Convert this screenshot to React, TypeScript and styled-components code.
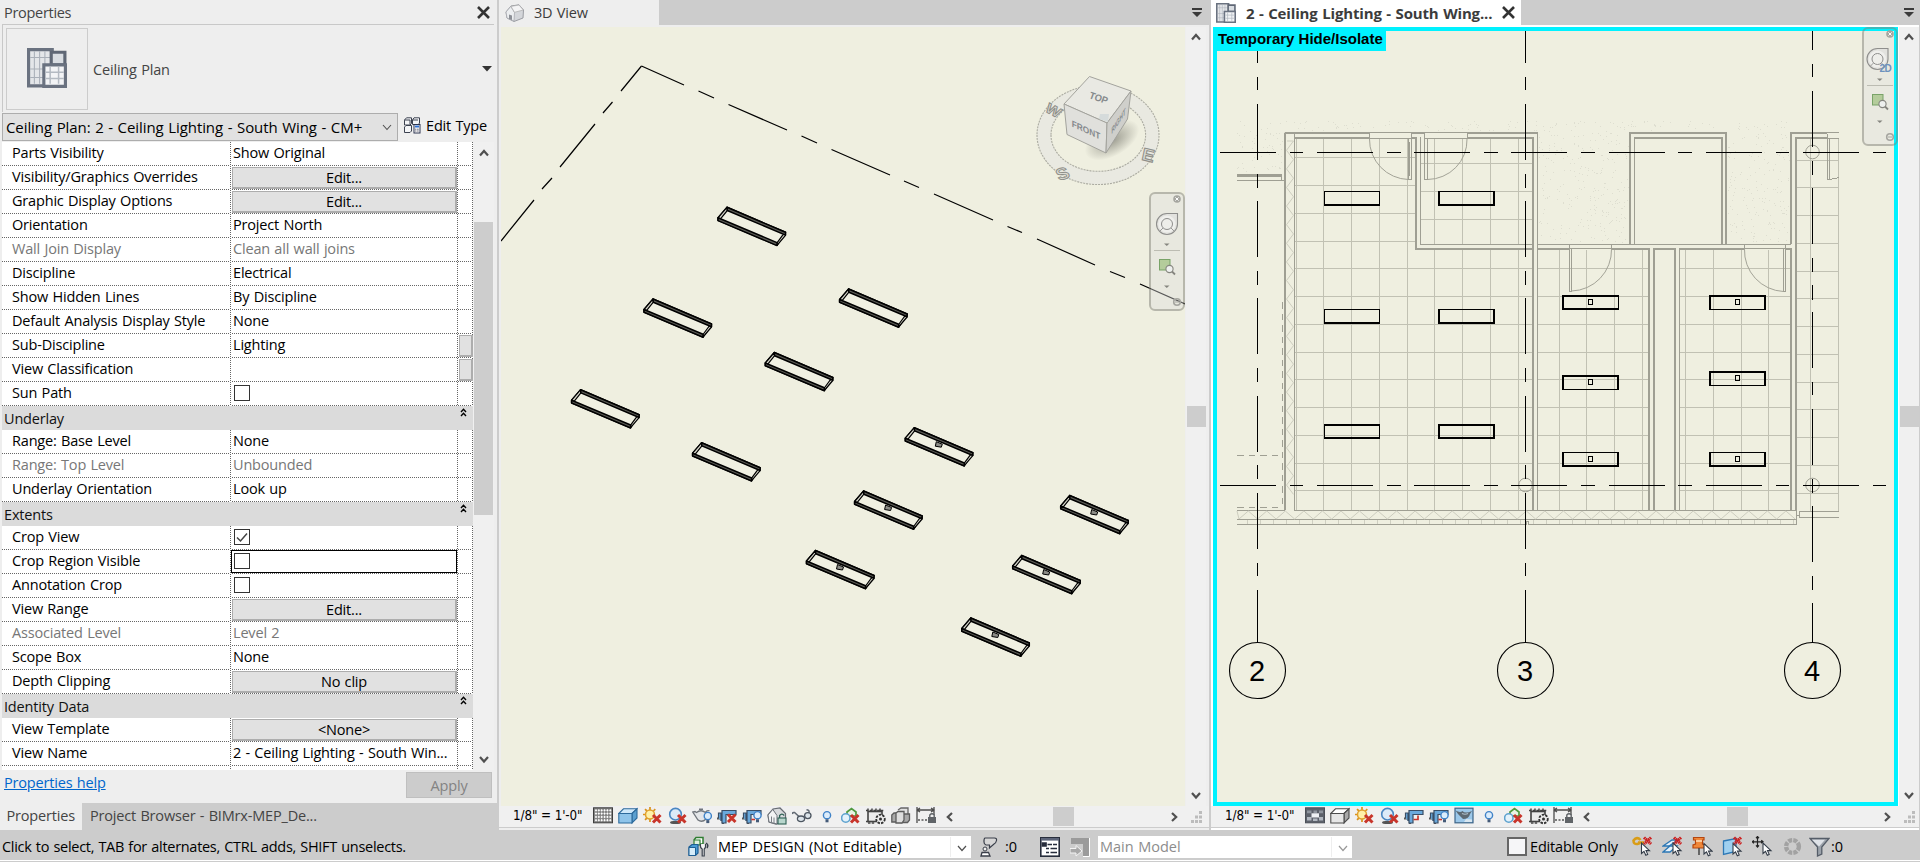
import React from "react";
import styled, { createGlobalStyle, css } from "styled-components";

const GlobalStyle = createGlobalStyle`
  * { box-sizing: border-box; }
  html, body { margin: 0; padding: 0; overflow: hidden; }
  body { background: #ccc; font-family: "Open Sans", "Noto Sans", sans-serif; font-size: 14.5px; letter-spacing: -0.18px; word-spacing: 0.8px; color: #000; }
  svg { display: block; flex: none; }
`;

/* ---------- frame ---------- */

const AppFrame = styled.div`
  width: 1920px;
  height: 862px;
  display: flex;
  flex-direction: column;
  background: #ccc;
`;

const Workspace = styled.div`
  display: flex;
  height: 830px;
`;

/* ---------- properties palette ---------- */

const Palette = styled.section`
  width: 497px;
  height: 830px;
  display: flex;
  flex-direction: column;
  background: #eee;
`;

const Splitter = styled.div<{ $w: number }>`
  width: ${(p) => p.$w}px;
  height: 830px;
  background: #ccc;
`;

const PaletteTitle = styled.header`
  height: 24px;
  display: flex;
  align-items: center;
  justify-content: space-between;
  padding: 0 7px 0 4px;
  color: #444;
  letter-spacing: -0.3px;
`;

const TypeSelector = styled.div`
  height: 88px;
  margin: 0 3px 0 2px;
  border-top: 1px solid #c8c8c8;
  border-left: 1px solid #c8c8c8;
  display: flex;
  align-items: center;
  padding: 0 2px 0 3px;
  color: #444;
`;

const Preview = styled.div`
  width: 82px;
  height: 82px;
  border: 1px solid #ccc;
  display: flex;
  padding: 19px 0 0 20px;
`;

const TypeName = styled.span`
  flex: 1;
  padding: 1px 0 0 5px;
`;

const InstanceRow = styled.div`
  height: 30px;
  padding: 1px 0 1px 2px;
  display: flex;
  align-items: center;
`;

const InstanceSelect = styled.div`
  width: 396px;
  height: 28px;
  border: 1px solid #adadad;
  background: #e1e1e1;
  display: flex;
  align-items: center;
  justify-content: space-between;
  padding: 0 5px 0 3px;
  font-size: 15px;
  letter-spacing: -0.08px;
`;

const EditType = styled.div`
  display: flex;
  align-items: center;
  gap: 5px;
  padding: 0 0 4px 6px;
`;

const GridArea = styled.div`
  height: 628px;
  margin: 0 3px 0 2px;
  display: flex;
`;

const Grid = styled.div`
  width: 471px;
  height: 628px;
  overflow: hidden;
  background: #fff;
`;

const dotsX = css`repeating-linear-gradient(90deg, #666 0 1px, #fff 1px 2px)`;
const dotsY = css`repeating-linear-gradient(180deg, #666 0 1px, #fff 1px 2px)`;

const Row = styled.div`
  height: 24px;
  display: flex;
  background: ${dotsX} 0 23px / 100% 1px no-repeat;
`;

const NameCell = styled.div<{ $dim?: boolean }>`
  width: 229px;
  height: 24px;
  padding-left: 10px;
  line-height: 22px;
  color: ${(p) => (p.$dim ? "#777" : "#000")};
  background: ${dotsY} 228px 0 / 1px 100% no-repeat;
`;

const ValueCell = styled.div<{ $dim?: boolean; $focus?: boolean }>`
  width: 227px;
  height: 24px;
  padding-left: ${(p) => (p.$focus ? 0 : 2)}px;
  line-height: 22px;
  white-space: nowrap;
  color: ${(p) => (p.$dim ? "#777" : "#000")};
  background: ${dotsY} 226px 0 / 1px 100% no-repeat;
`;

const FocusRing = styled.div`
  width: 226px;
  height: 23px;
  border: 1px solid #000;
  padding: 0 0 0 1px;
`;

const AssocCell = styled.div`
  width: 15px;
  height: 24px;
  background: ${dotsY} 14px 0 / 1px 100% no-repeat;
`;

const CellButton = styled.div`
  width: 225px;
  height: 22px;
  margin-top: 1px;
  margin-left: -1px;
  border: 1px solid #adadad;
  border-right-width: 2px;
  border-bottom-width: 2px;
  background: #e1e1e1;
  text-align: center;
  line-height: 20px;
`;

const AssocButton = styled(CellButton)`
  width: 14px;
  margin-left: 1px;
`;

const Check = styled.div<{ $inset?: boolean }>`
  width: 16px;
  height: 16px;
  margin-top: ${(p) => (p.$inset ? 2 : 3)}px;
  margin-left: 1px;
  border: 1px solid #333;
  background: #fff;
`;

const GroupRow = styled.div`
  height: 24px;
  display: flex;
  justify-content: space-between;
  padding: 2px 6px 0 2px;
  line-height: 21px;
  background: #dbdbdb;
  color: #111;
`;

const PaletteFooter = styled.div`
  height: 33px;
  display: flex;
  justify-content: space-between;
  padding: 2px 5px 0 4px;
`;

const HelpLink = styled.a`
  color: #0066cc;
  text-decoration: underline;
  line-height: 22px;
`;

const Apply = styled.div`
  width: 86px;
  height: 26px;
  border: 1px solid #bfbfbf;
  background: #ccc;
  color: #838383;
  text-align: center;
  line-height: 25px;
`;

const PaletteTabs = styled.div`
  height: 27px;
  display: flex;
  background: #ccc;
  color: #444;
`;

const PaletteTab = styled.div<{ $active?: boolean; $w: number }>`
  width: ${(p) => p.$w}px;
  padding-left: ${(p) => (p.$active ? 6.5 : 8)}px;
  line-height: 25px;
  background: ${(p) => (p.$active ? "#eee" : "#ccc")};
`;

/* ---------- scroll bars ---------- */

const VScroll = styled.div<{ $w?: number }>`
  width: ${(p) => p.$w ?? 20}px;
  height: 100%;
  background: #f0f0f0;
  display: flex;
  flex-direction: column;
  align-items: center;
`;

const Gap = styled.div<{ $h: number }>`
  height: ${(p) => p.$h}px;
`;

const VThumb = styled.div<{ $h: number }>`
  width: 19px;
  height: ${(p) => p.$h}px;
  background: #cdcdcd;
`;

/* ---------- document views ---------- */

const DocView = styled.section<{ $w: number; $bg: string }>`
  width: ${(p) => p.$w}px;
  height: 830px;
  display: flex;
  flex-direction: column;
  background: ${(p) => p.$bg};
`;

const TabBar = styled.div<{ $pad: number }>`
  height: 25px;
  display: flex;
  align-items: center;
  justify-content: space-between;
  background: #ccc;
  padding-right: ${(p) => p.$pad}px;
`;

const DocTab = styled.div<{ $w: number; $bg: string; $bold?: boolean }>`
  width: ${(p) => p.$w}px;
  height: 25px;
  display: flex;
  align-items: center;
  padding: 0 7px 0 ${(p) => (p.$bold ? 5 : 6)}px;
  gap: 10px;
  color: #3c3c3c;
  white-space: nowrap;
  background: ${(p) => p.$bg};
  font-weight: ${(p) => (p.$bold ? 700 : 400)};
  font-size: ${(p) => (p.$bold ? 15 : 14.5)}px;
  letter-spacing: ${(p) => (p.$bold ? -0.15 : -0.18)}px;
`;

const DocTitle = styled.span`
  flex: 1;
`;

const DocBody = styled.div<{ $pad: number }>`
  height: 779px;
  margin-top: 2px;
  margin-left: ${(p) => p.$pad}px;
  display: flex;
  gap: 1px;
`;

const Canvas = styled.div`
  position: relative;
  height: 779px;
  background: #efefe0;
`;

const IsolateBadge = styled.div`
  position: absolute;
  left: 0;
  top: 0;
  width: 173px;
  height: 24px;
  padding-left: 5px;
  background: #00f2ff;
  font: bold 15px/24px "Liberation Sans", Arial, sans-serif;
  letter-spacing: 0;
  word-spacing: 0;
  white-space: nowrap;
`;

const NavSlot = styled.div<{ $x: number; $y: number }>`
  position: absolute;
  left: ${(p) => p.$x}px;
  top: ${(p) => p.$y}px;
`;

const ControlBar = styled.div`
  height: 22px;
  display: flex;
  background: #f0f0f0;
  border-bottom: 1px solid #ccc;
`;

const Scale = styled.span<{ $pad: number; $w: number }>`
  width: ${(p) => p.$w}px;
  padding-left: ${(p) => p.$pad}px;
  font: 13.3px/20px "DejaVu Sans Condensed", "DejaVu Sans", sans-serif;
  letter-spacing: -0.1px;
  word-spacing: 0;
  white-space: nowrap;
`;

const IconStrip = styled.div`
  display: flex;
  gap: 4.85px;
  padding-top: 1px;
`;

const HScroll = styled.div`
  flex: 1;
  display: flex;
  align-items: center;
`;

const HSpace = styled.div<{ $w: number }>`
  width: ${(p) => p.$w}px;
`;

const HThumb = styled.div`
  width: 21px;
  height: 19px;
  background: #cdcdcd;
`;

/* ---------- status bar ---------- */

const StatusBar = styled.footer`
  height: 31px;
  display: flex;
  align-items: center;
  background: #ccc;
  border-bottom: 1px solid #fff;
  padding: 3px 0 0 2px;
  white-space: nowrap;
`;

const StatusHint = styled.div`
  width: 686px;
  letter-spacing: -0.29px;
`;

const Combo = styled.div<{ $dim?: boolean }>`
  width: 254px;
  height: 22px;
  display: flex;
  align-items: center;
  justify-content: space-between;
  padding: 0 1px 0 ${(p) => (p.$dim ? 2 : 1)}px;
  background: #fff;
  letter-spacing: 0;
  color: ${(p) => (p.$dim ? "#8c8c8c" : "#000")};
`;

const ComboArrow = styled.span`
  width: 20px;
  height: 20px;
  padding: 6px 0 0 6px;
  border-left: 1px solid #eee;
`;

const StatusCell = styled.div<{ $w: number; $x?: number }>`
  width: ${(p) => p.$w}px;
  padding-left: ${(p) => p.$x ?? 0}px;
`;

const BigCheck = styled.div`
  width: 20px;
  height: 19px;
  border: 2px solid #666;
  background: #f6f6f8;
`;

/* ---------- small glyphs ---------- */

const Chevron = ({ dir, size = 10, color = "#505050", sw = 2.2 }: { dir: "up" | "down" | "left" | "right"; size?: number; color?: string; sw?: number }) => {
  const d = { up: "M1 7.5L5 3L9 7.5", down: "M1 3L5 7.5L9 3", left: "M7 1L2.8 5L7 9", right: "M3 1L7.2 5L3 9" }[dir];
  return (
    <svg width={size} height={size} viewBox="0 0 10 10">
      <path d={d} fill="none" stroke={color} strokeWidth={sw} />
    </svg>
  );
};

const CloseX = ({ s = 13 }: { s?: number }) => (
  <svg width={s} height={s} viewBox="0 0 13 13">
    <path d="M1 1L12 12M12 1L1 12" stroke="#333" strokeWidth="2.6" />
  </svg>
);

const TabMenu = () => (
  <svg width="10" height="9" viewBox="0 0 10 9">
    <path d="M0 0H10V2H0zM0 4H10L5 9z" fill="#3a3a3a" />
  </svg>
);

const DoubleUp = () => (
  <svg width="7" height="9" viewBox="0 0 7 9">
    <path d="M1 4L3.5 1.3L6 4M1 8L3.5 5.3L6 8" fill="none" stroke="#000" strokeWidth="1.4" />
  </svg>
);

const Grip = () => (
  <svg width="12" height="12" viewBox="0 0 12 12">
    {[[8, 0], [8, 4.5], [4, 4.5], [8, 9], [4, 9], [0, 9]].map(([x, y]) => (
      <rect key={`${x}-${y}`} x={x} y={y} width="3" height="3" fill="#bcbcbc" />
    ))}
  </svg>
);

const PlanIcon = ({ size }: { size: number }) => (
  <svg width={size} height={size} viewBox="0 0 38 38">
    <path d="M1.5 1.5H24V36H1.5z" fill="#e4e6e9" stroke="#6a7280" strokeWidth="3" />
    <path d="M7 3V34M12 3V34M17 3V34M3 9H22M3 20H22M3 28H22" stroke="#a9afb8" strokeWidth="1" />
    <path d="M23 4H36V16H23z" fill="#d9dde2" stroke="#5f6775" strokeWidth="3" />
    <path d="M16 16H36.5V36.5H16z" fill="#f3f4f6" stroke="#6a7280" strokeWidth="3" />
    <path d="M22 18V34M30 18V34M18 23H35M18 29H35" stroke="#b4bac2" strokeWidth="1.4" />
  </svg>
);

const HouseIcon = () => (
  <svg width="19" height="18" viewBox="0 0 19 18">
    <path d="M1 8L6 2L14 .8L18.5 6L18 14L9 17.5L2 14z" fill="#d4d6da" stroke="#9a9ca2" strokeWidth="1" />
    <path d="M1 8L5.8 2.4L9.5 8.5L9 17L2 14z" fill="#eceef0" stroke="#a8aab0" strokeWidth=".8" />
    <path d="M6 2.4L14 1L18.3 6L9.5 8.3z" fill="#f4f4f5" stroke="#aaa" strokeWidth=".7" />
    <path d="M4 10.5V15L7 16V11.5z" fill="#8d9097" />
  </svg>
);

const EditTypeIcon = () => (
  <svg width="17" height="17" viewBox="0 0 17 17">
    <g fill="#f4f5f7" stroke="#3c4250" strokeWidth="1">
      <path d="M.5 3L2.5 .8H7.5V6.5L6 8H.5zM8.5 3L10 .8H15.5V6L14.5 7.5H8.5z" />
      <path d="M.5 10L2 8.5H7.5V14L6 15.5H.5z" />
      <path d="M.5 3H6V8M8.5 3H14" />
    </g>
    <rect x="10" y="7.5" width="6" height="8.5" fill="#fff" stroke="#2c3550" />
    <rect x="11" y="8.5" width="4" height="2" fill="#2f6fd0" />
    <path d="M11.2 12.2H15M11.2 14H15" stroke="#556" strokeDasharray="1 .6" />
  </svg>
);

/* ---------- view control bar icons (20 x 18) ---------- */

const Ico = ({ children, w = 20, h = 18 }: { children: React.ReactNode; w?: number; h?: number }) => (
  <svg width={w} height={h} viewBox={`0 0 ${w} ${h}`}>{children}</svg>
);

const RedX = ({ x, y, s = 7.5 }: { x: number; y: number; s?: number }) => (
  <path d={`M${x} ${y}l${s} ${s}m0 ${-s}l${-s} ${s}`} stroke="#c8352b" strokeWidth="3" />
);

const Bulb = ({ x }: { x: number }) => (
  <g>
    <circle cx={x} cy="8.2" r="3.6" fill="#dcecfb" stroke="#3f82c8" strokeWidth="1.4" />
    <path d={`M${x - 1.5} 12.3h3v3h-3z`} fill="#445a78" />
  </g>
);

const DetailFine = () => {
  const dots = [];
  for (let r = 0; r < 4; r++) for (let c = 0; c < 6; c++) dots.push(<path key={`${r}-${c}`} d={`M${3 + c * 2.85} ${1.9 + r * 3.3}l1.2 1.4l-1.2 1.4l-1.2-1.4z`} fill="#fff" />);
  return <Ico><rect x=".5" y=".8" width="19" height="15" fill="#848484" stroke="#3f3f3f" />{dots}</Ico>;
};

const DetailCoarse = () => (
  <Ico>
    <rect x=".5" y=".8" width="19" height="15" fill="#5c616b" stroke="#4b4f57" />
    <path d="M2 3.5H6.5V6.3H2zM8.5 3.5H12V6.3H8.5zM14 3.5H18V6.3H14z" fill="#8f959f" />
    <path d="M2 10H6.5V13.5H2zM14 10H18V13.5H14zM8 11.5H12.5V14H8z" fill="#b2b8c1" />
    <path d="M6.5 6.3H14V10.5H6.5z" fill="#eef1f5" />
  </Ico>
);

const BoxIcon = ({ a, b, c, line }: { a: string; b: string; c: string; line: string }) => (
  <Ico>
    <path d="M.8 6.5L5.5 1.8H19L14 6.5z" fill={a} stroke={line} strokeWidth="1.1" />
    <path d="M14 6.5L19 1.8V11L14 16z" fill={c} stroke={line} strokeWidth="1.1" />
    <path d="M.8 6.5H14V16H.8z" fill={b} stroke={line} strokeWidth="1.1" />
  </Ico>
);

const SunOff = () => (
  <Ico>
    <path d="M7 0V3M7 12V15M-.5 7.5H3M2 2.2L4 4M12.3 2.2L10.4 4M2 12.8L4 11" stroke="#d9921c" strokeWidth="1.7" />
    <circle cx="7" cy="7.5" r="4.5" fill="#fff0a8" stroke="#e0a02e" strokeWidth="1.5" />
    <RedX x={10} y={8} />
  </Ico>
);

const ShadowOff = () => (
  <Ico>
    <ellipse cx="7.5" cy="15.4" rx="5.5" ry="1.6" fill="#555" />
    <circle cx="7.5" cy="7.2" r="5.8" fill="#dcebf8" stroke="#4a87c2" strokeWidth="1.6" />
    <RedX x={10} y={8} />
  </Ico>
);

const Teapot = () => (
  <Ico>
    <path d="M4.5 5.5Q9 2 13.5 5.5L14 12Q10 16 6 13L.8 5L3 4.5z" fill="#e3e5e8" stroke="#70757c" strokeWidth="1.3" />
    <path d="M7 2.2H11M13.5 5Q16 3 17.5 4" fill="none" stroke="#70757c" strokeWidth="1.4" />
    <g transform="translate(0 .8)"><Bulb x={15.8} /></g>
  </Ico>
);

const CropBase = ({ extra }: { extra: React.ReactNode }) => (
  <Ico>
    <path d="M0 11.5H3M6 14V17" stroke="#555" strokeWidth="2.2" />
    <path d="M4 14V6H1.5V11M5 3.5H19V7.5H9V16H5z" fill="#6aa9dc" stroke="#3a4e66" strokeWidth="1.2" />
    {extra}
  </Ico>
);

const CropOff = () => <CropBase extra={<RedX x={11} y={7.5} />} />;
const CropOn = () => <CropBase extra={<path d="M9.5 12.5H14V8.5" fill="none" stroke="#c8352b" strokeWidth="1.7" />} />;
const CropShow = () => <CropBase extra={<><path d="M9.5 12.5H13" stroke="#c8352b" strokeWidth="1.6" /><Bulb x={15.5} /></>} />;

const LockedHouse = () => (
  <Ico>
    <path d="M1 8L6 2L13 1L18.5 6.5V14L9 17L2 15z" fill="#d8dadd" stroke="#666b72" strokeWidth="1.2" />
    <path d="M1 8L5.8 2.4L10 8.5V17L2 15z" fill="#f2f3f4" stroke="#6c7178" strokeWidth="1" />
    <path d="M4.5 9.5V15M7 10.5V16" fill="none" stroke="#7a7f86" strokeWidth="1" />
    <rect x="11" y="11" width="8" height="6" fill="#b8d6cd" stroke="#2e6155" strokeWidth="1.1" />
    <path d="M12.6 11V8.5Q14.9 5.8 17.2 8.5" fill="none" stroke="#2e6155" strokeWidth="1.3" />
  </Ico>
);

const Glasses = () => (
  <Ico>
    <path d="M.8 7Q.3 5 2.5 5.5L7 9.5M13.5 9L17 5.5Q17.5 3 14.5 2.8" fill="none" stroke="#626a74" strokeWidth="1.5" />
    <ellipse cx="9" cy="11.8" rx="3.6" ry="2.8" fill="#dce4ea" stroke="#4d5661" strokeWidth="1.3" />
    <ellipse cx="15.8" cy="8.6" rx="3.2" ry="3" fill="#dce4ea" stroke="#4d5661" strokeWidth="1.3" />
  </Ico>
);

const BulbIcon = () => <Ico><Bulb x={10} /></Ico>;

const AnalyticOff = () => (
  <Ico>
    <path d="M6 5L10.5 1.5L15 5V9H6z" fill="#e8f4e4" stroke="#4f9a3e" strokeWidth="1.7" />
    <circle cx="4.8" cy="11" r="4.2" fill="#e4f2fb" stroke="#5fa3cf" strokeWidth="1.6" />
    <RedX x={10} y={8} />
  </Ico>
);

const Highlight = () => (
  <Ico>
    <rect x="2" y="4.5" width="14" height="10" fill="#ececec" stroke="#444" strokeWidth="1.6" />
    <path d="M0 3.5H18M2 1.5V4M6 1.5V4M10 1.5V4M14 1.5V4M2 16H9M0 14.5H2" stroke="#444" strokeWidth="1.5" strokeDasharray="2.5 1.2" />
    <circle cx="14.5" cy="12" r="4.3" fill="#e9e9e9" stroke="#333" strokeWidth="1.8" strokeDasharray="2.4 1.2" />
    <circle cx="14.5" cy="12" r="1.5" fill="#333" />
  </Ico>
);

const Displace = () => (
  <Ico>
    <path d="M7 3L10 1H17V9L14 11" fill="#e2e2e2" stroke="#666" strokeWidth="1.3" />
    <path d="M.8 8L3 6H8V13L6 15H.8zM10 9L12 7H18.5V13L16.5 15.5H10z" fill="#a9a9a9" stroke="#5c5c5c" strokeWidth="1.3" />
    <path d="M5 6L7 4.5H13V13L11 16H5z" fill="#dedede" stroke="#5c5c5c" strokeWidth="1.3" />
  </Ico>
);

const Constraints = () => (
  <Ico>
    <path d="M1 0V16M18 0V8M1 3H18M4 1L1 3L4 5M15 1L18 3L15 5" fill="none" stroke="#4c4c4c" strokeWidth="1.3" />
    <path d="M2 13H11" stroke="#555" strokeDasharray="2 1.5" strokeWidth="1.3" />
    <rect x="12" y="10" width="8" height="6" fill="#606468" />
    <path d="M13.8 10V8Q16 5.5 18.2 8V10" fill="none" stroke="#606468" strokeWidth="1.4" />
  </Ico>
);

const RevealIcon = () => (
  <Ico>
    <rect x="1" y="1.2" width="18" height="14.6" fill="#9cc8ea" stroke="#3e6488" strokeWidth="1.2" />
    <path d="M1.6 3.5Q6 6 8.5 4Q11 7 18 4L16 7Q15 12 9 12L4 7z" fill="#5d6973" />
    <path d="M8 6.5Q11 8 14 6.5" fill="none" stroke="#aebfca" strokeWidth="1.2" />
    <path d="M12 12L18 12.5V15H10z" fill="#d8e7f2" />
  </Ico>
);

/* ---------- status bar icons ---------- */

const Cursor = ({ x, y }: { x: number; y: number }) => (
  <path transform={`translate(${x} ${y})`} d="M0 0V10.5L2.5 8.3L4.3 12.3L6.2 11.4L4.5 7.6H8z" fill="#fff" stroke="#333c48" strokeWidth="1.1" />
);

const SmallRedX = () => <path d="M12 1.5L19 8M19 1.5L12 8" stroke="#cc1f1f" strokeWidth="3" strokeDasharray="1.6 .5" />;

const WorksetIcon = () => (
  <Ico w={21} h={21}>
    <path d="M6 4L8 1.5H15V8H11V5.5" fill="#fff" stroke="#2f7d32" strokeWidth="1.5" />
    <path d="M6 4H12V9H6z" fill="#dff0dc" stroke="#2f7d32" strokeWidth="1.2" />
    <path d="M1 11L4 8.5H10V17L7.5 19.5H1z" fill="#4a9bd4" stroke="#1e5f94" strokeWidth="1.2" />
    <path d="M1 11.5H7.5V19.5H1z" fill="#d5ecf9" stroke="#1e5f94" strokeWidth="1" />
    <path d="M12.5 8Q12 12 14.2 13V20H16.2V13Q18 12 17.5 8" fill="#f5f5f5" stroke="#39404c" strokeWidth="1.2" />
    <path d="M18 7Q21 9 19 12" fill="none" stroke="#39404c" strokeWidth="1.5" />
  </Ico>
);

const RequestIcon = () => (
  <Ico w={18} h={20}>
    <path d="M5 1H14.5Q17 1 16.5 3.5T14 7L9.5 11V8H6Q4 7.5 4 5Q3.8 1.5 5 1z" fill="#d6d6d6" stroke="#3a3f4a" strokeWidth="1.2" />
    <circle cx="5" cy="12" r="2" fill="#efefef" stroke="#3a3f4a" />
    <path d="M1 19L2 15.5H8.5L10 19z" fill="#fff" stroke="#3a3f4a" strokeWidth="1.3" />
  </Ico>
);

const OptionsIcon = () => (
  <Ico w={20} h={20}>
    <rect x=".8" y=".8" width="18.4" height="18.4" fill="#fff" stroke="#272d3c" strokeWidth="1.6" />
    <path d="M1 1H19V3.6H1z" fill="#5b6378" />
    <path d="M2.5 6H6V9H2.5zM7.5 7.5H12M6 11.5H9M10.5 11.5H17M6 15.5H9M10.5 15.5H17M13 7.5H17" fill="#272d3c" stroke="#272d3c" strokeWidth="1.7" />
  </Ico>
);

const AddOptionIcon = () => (
  <Ico w={20} h={20}>
    <path d="M1 1H19V19H13V7H1z" fill="#9b9b9b" />
    <path d="M19.5 1V19.5H13" stroke="#fff" fill="none" />
    <path d="M0 11.5H6V8.5L12 14L6 19V16H0z" fill="#a8a8a8" stroke="#f3f3f3" strokeWidth="1" />
  </Ico>
);

const SelectLinks = () => (
  <Ico w={21} h={21}>
    <path d="M8.5 4Q5 0 1.5 4.5Q1.5 8.5 5.5 8L8 7M6 6.5H12" fill="none" stroke="#d99c16" strokeWidth="2.6" />
    <SmallRedX /><Cursor x={9.5} y={7} />
  </Ico>
);

const SelectUnderlay = () => (
  <Ico w={21} h={21}>
    <path d="M1 10L10 4H16L7 10zM1 16L8 10H15L8 16z" fill="#e7f2fb" stroke="#2b77b5" strokeWidth="1.3" />
    <SmallRedX /><Cursor x={11} y={7} />
  </Ico>
);

const SelectPinned = () => (
  <Ico w={21} h={21}>
    <path d="M1.5 1.5H12V4H10.5V8L13 9V12H1V9L3.5 8V4H1.5z" fill="#f0883a" stroke="#b5460f" strokeWidth="1.2" />
    <path d="M4 5H10" stroke="#ffe0bd" strokeWidth="1.5" />
    <path d="M7 12V19" stroke="#444" strokeWidth="1.5" /><Cursor x={12} y={7.5} />
  </Ico>
);

const SelectFace = () => (
  <Ico w={21} h={21}>
    <path d="M1.5 5L14 2.5V15.5L1.5 18.5z" fill="#9fd0f0" stroke="#2b77b5" strokeWidth="1.3" />
    <SmallRedX /><Cursor x={11} y={7.5} />
  </Ico>
);

const DragIcon = () => (
  <Ico w={21} h={21}>
    <path d="M5.5 .5V11M0 5.8H11M4 2.2L5.5 .5L7 2.2M4 9.4L5.5 11L7 9.4M1.8 4.3L.3 5.8L1.8 7.3M9.3 4.3L11 5.8L9.3 7.3" fill="none" stroke="#222" strokeWidth="1.2" />
    <Cursor x={11} y={7} />
  </Ico>
);

const BusyIcon = () => (
  <Ico w={19} h={19}>
    <circle cx="9.5" cy="9.5" r="6.4" fill="none" stroke="#a2a2a2" strokeWidth="4.4" strokeDasharray="3.9 1.13" />
  </Ico>
);

const FilterIcon = () => (
  <Ico w={21} h={20}>
    <path d="M1 1.5H20L12.8 10V17L8.5 19V10z" fill="#9ca3ab" stroke="#555d68" strokeWidth="1.3" />
    <path d="M3 2.8H16L10 9.5z" fill="#dfe3e8" />
  </Ico>
);

/* ---------- navigation bar ---------- */

const NavBar = ({ twoD }: { twoD?: boolean }) => {
  const cx = twoD ? 15.5 : 18;
  return (
    <svg width="36" height="119" viewBox="0 0 36 119">
      {twoD ? <path d="M2 4H32V117H2z" fill="#e9e9e0" /> : <rect x="2" y="2" width="32" height="115" rx="4" fill="#dedede" fillOpacity=".4" />}
      <rect x="1" y="1" width="34" height="117" rx="5" fill="none" stroke="#808078" strokeOpacity=".5" strokeWidth="2" />
      <circle cx="28" cy="7" r="3.8" fill="#a6a6a0" />
      <path d="M26.4 5.4l3.2 3.2m0-3.2l-3.2 3.2" stroke="#fff" strokeWidth="1" />
      <path d={`M${cx} 21.5H${cx + 10.5}V32A10.5 10.5 0 1 1 ${cx} 21.5z`} fill="#e2e2de" stroke="#8e8e8c" strokeWidth="1.1" />
      <circle cx={cx} cy="32" r="8.6" fill="#efefec" />
      <circle cx={cx} cy="32" r="5.5" fill="#eeeeea" stroke="#8e8e8c" />
      <path d={`M${cx - 4} 36l-3 3M${cx + 4} 36l3 3`} stroke="#9a9a98" />
      {twoD && <text x="17.5" y="44.5" letterSpacing="-0.5" fontFamily="Liberation Sans, Arial, sans-serif" fontWeight="700" fontSize="10" fill="#6d92bd">2D</text>}
      <path d="M15 51.5H20.5L17.8 54z" fill="#85857f" />
      <path d="M5 58.5H31" stroke="#bcbcb2" />
      <rect x="10.5" y="67.5" width="10.5" height="10.5" fill="#b4cc9b" stroke="#79a368" />
      <circle cx="20.5" cy="77" r="3.6" fill="#eef0ee" stroke="#85857f" strokeWidth="1.1" />
      <path d="M23 79.5L26 82.5" stroke="#85857f" strokeWidth="1.8" />
      <path d="M15 93.5H20.5L17.8 96z" fill="#85857f" />
      <circle cx="28" cy="110" r="3.3" fill="none" stroke="#a6a6a0" strokeWidth="1.6" />
      <path d="M26 110h4" stroke="#a6a6a0" />
    </svg>
  );
};

/* ---------- 3D drawing ---------- */

const fixtures3d: [number, number, boolean?][] = [
  [727, 207.3], [848.6, 289], [653, 299], [774.3, 352.5], [580.6, 389.7], [701.6, 442.7],
  [914.3, 427.7, true], [863.6, 491, true], [815.5, 550.5, true], [1069.7, 495.5, true], [1021.7, 555.5, true], [970.8, 618, true],
];

const Fixture3d = ({ x, y, knob }: { x: number; y: number; knob?: boolean }) => (
  <g transform={`translate(${x} ${y})`} stroke="#000" strokeWidth="1.5" strokeLinejoin="round">
    <path d="M0 0L58.5 25L50 38L-9 13V10.5z" fill="#f0f0e2" />
    <path d="M-9 10.5L0 0L.3 3.2L-6.5 11.6z" fill="#d8d8cc" strokeWidth="1.2" />
    <path d="M58.5 25V28L50 38V35.5L55.5 28z" fill="#d8d8cc" strokeWidth="1.2" />
    <path d="M0 0L58.5 25V27.8L.3 3.2z" fill="#5c5c56" />
    <path d="M-9 10.5L50 35.3V38.3L-9 13.3z" fill="#5c5c56" />
    {knob && <path d="M22 14L28 16.5L27 19.5L21 18.5z" fill="#8c8c86" strokeWidth="1" />}
  </g>
);

const ViewCube = () => (
  <g>
    <path fillRule="evenodd" d="M1037 135a61 49.5 0 1 0 122 0a61 49.5 0 1 0-122 0zM1051 135a47.3 36.3 0 1 0 94.6 0a47.3 36.3 0 1 0-94.6 0z" fill="#e9e9e1" stroke="#ababa1" strokeWidth="1.1" strokeDasharray="2 1" />
    <ellipse cx="1112" cy="140" rx="30" ry="16" fill="url(#cubeShade)" transform="rotate(-30 1112 140)" />
    <g stroke="#a3a39d" strokeWidth="1">
      <path d="M1089.5 76.5L1131 91L1107 123L1064 104z" fill="#e9e9e3" />
      <path d="M1064 104L1107 123L1106 153L1067 134.5z" fill="#e0e0dc" />
      <path d="M1131 91L1127.5 119L1106 153L1107 123z" fill="#cfcfcb" />
    </g>
    <path d="M1100 114L1109 114L1108 122L1099 119z" fill="#d5dbdb" />
    <g fontFamily="Liberation Sans, Arial, sans-serif" fontWeight="700" fill="#85898c" textAnchor="middle" wordSpacing="0" letterSpacing="0">
      <text transform="matrix(.88 .3 -.35 .9 1097.5 101)" fontSize="10">TOP</text>
      <text transform="matrix(.92 .42 0 1 1086 133)" fontSize="9">FRONT</text>
      <text transform="matrix(.5 -.75 0 1 1118.5 124)" fontSize="9">RIGHT</text>
      <g fill="#dcdcd4" stroke="#8f8f89" strokeWidth="1">
        <text transform="matrix(.95 .5 -.5 .8 1051 114.5)" fontSize="15">W</text>
        <text transform="matrix(1 -.3 .4 .85 1065 179)" fontSize="18">S</text>
        <text transform="matrix(1 .25 -.2 .95 1147 161)" fontSize="18">E</text>
      </g>
    </g>
  </g>
);

const dashes3d = [
  "M641.5 66L621 91M612.5 102L603 113M595 124L560 167M552 178L542 189M534 200L501 241",
  "M641.5 66L684 85M698.5 91L714 98M728.5 104.5L787 130M801.5 136L817 143M831.5 149.5L890 175M904 181L919 187.5",
  "M934 194L993 220M1007.5 226.5L1022 232.5M1037 239L1095 265M1110 271.5L1125 277.5M1140 284L1185 304",
];

const ModelDrawing = () => (
  <svg width="684" height="779" viewBox="501 27 684 779">
    <defs>
      <radialGradient id="cubeShade">
        <stop offset="0" stopColor="#77776d" stopOpacity=".7" />
        <stop offset="1" stopColor="#77776d" stopOpacity="0" />
      </radialGradient>
    </defs>
    {dashes3d.map((d) => <path key={d} d={d} stroke="#000" fill="none" strokeWidth="1.2" />)}
    {fixtures3d.map(([x, y, k]) => <Fixture3d key={`${x}`} x={x} y={y} knob={k} />)}
    <ViewCube />
  </svg>
);

/* ---------- ceiling plan drawing ---------- */

const hLines = (ys: number[], x1: number, x2: number) => ys.map((y) => `M${x1} ${y}H${x2}`).join("");
const vLines = (xs: number[], y1: number, y2: number) => xs.map((x) => `M${x} ${y1}V${y2}`).join("");

const lowRows = [268.5, 296.5, 324.5, 352.5, 379.5, 407.5, 435.5, 463.5, 490.5];
const tiles = [
  vLines([1296.5, 1323.5, 1351.5, 1379.5, 1407.5], 139, 510),
  vLines([1434.5, 1462.5, 1490.5, 1518.5], 139, 244),
  vLines([1434.5, 1462.5, 1490.5, 1518.5], 250, 510),
  hLines([157.5, 185.5, 213.5, 241.5], 1295, 1415),
  hLines([163.5, 191.5, 219.5], 1421, 1532),
  hLines(lowRows, 1295, 1532),
  hLines(lowRows, 1538, 1648),
  vLines([1559.5, 1586.5, 1614.5, 1642.5], 250, 510),
  hLines(lowRows, 1680, 1790),
  vLines([1685.5, 1713.5, 1741.5, 1768.5], 250, 510),
  hLines([160.5, 187.5, 215.5, 243.5, 271.5, 298.5, 326.5, 354.5, 382.5, 409.5, 437.5, 465.5, 493.5], 1797, 1838),
  vLines([1810.5], 139, 511),
  "M1838.5 139V511",
].join("");

const thickWalls = [
  "M1285 133V510M1285 133H1369M1295 138H1369M1411 133H1425M1411 138H1416V249H1533M1467 133H1537M1467 138H1533V510",
  "M1538 249H1569M1611 249H1649V510M1654 510V249H1676M1675 249V510M1679 249H1744M1785 249H1791V510",
  "M1630 244V133H1726V244M1722 244V138H1634",
  "M1791 244V133H1827M1796 510V138H1827",
].join("");

const thinWalls = [
  "M1294.5 134V510M1369.5 132.5H1411.5V138.5H1369.5zM1424.5 132.5H1467.5V138.5H1424.5z",
  "M1420.5 137V244.5H1532M1537.5 132V510M1538 244.5H1791M1634.5 138V244M1679.5 249V510",
  "M1569.5 244V248.5H1611.5V244M1744.5 244V248.5H1785.5V244",
  "M1827.5 134V179.5H1829.5V138M1827 132.5H1839M1827 138.5H1839M1829.5 179.5L1839 177.5",
  "M1408.5 139V179.5H1411.5V139M1409.5 142V176M1424.5 139V179.5H1427.5V139",
  "M1569.5 249V291.5H1571.5V249M1783.5 249V291.5H1785.5V249",
  "M1237 180.5H1285M1281.5 175V180",
  "M1237 510.5H1285M1294 510.5H1796M1237 519.5H1796M1237 524.5H1526V521H1528V524.5H1796.5V510",
  "M1839 511.5H1799.5V517.5H1839M1797 515H1800",
].join("");

const doorArcs = [
  "M1369.5 139A40 40 0 0 0 1408.5 179.5", "M1427.5 179.5A40 40 0 0 0 1467 139",
  "M1571.5 291A41 41 0 0 0 1611.5 249", "M1744.5 249A41 41 0 0 0 1783.5 291.5",
].join("");

const zigWest = (() => {
  let d = "M1287 141";
  for (let y = 141, k = 0; y < 500; y += 9.3, k++) d += `L${k % 2 ? 1286.5 : 1293.5} ${y.toFixed(1)}`;
  return d;
})();

const zigSouth = (() => {
  let d = "M1237 511";
  for (let x = 1239, k = 0; x < 1796; x += 9.27, k++) d += `L${x.toFixed(1)} ${k % 2 ? 511 : 519}`;
  return d;
})();

const brickTicks = (() => {
  let d = "";
  for (let x = 1247; x < 1796; x += 13) d += `M${x + 0.5} 520V524`;
  return d;
})();

const speckles = (() => {
  const zones = [[1237, 121, 48, 52], [1285, 121, 253, 10], [1539, 121, 90, 122], [1631, 121, 160, 10], [1728, 133, 62, 110]];
  let seed = 7;
  const rnd = () => (seed = (seed * 16807) % 2147483647) / 2147483647;
  let d = "";
  zones.forEach(([x, y, w, h]) => {
    for (let i = 0; i < (w * h) / 40; i++) d += `M${Math.floor(x + rnd() * w)} ${Math.floor(y + rnd() * h) + 0.5}h1`;
  });
  return d;
})();

/* x, y, width, [top, right, bottom, left] edge weights, junction box */
const fixtures: [number, number, number, number[], boolean?][] = [
  [1324, 191, 56, [1, 1, 2, 1]], [1324, 309, 56, [1, 1, 2, 1]], [1324, 424, 56, [2, 1, 2, 1]],
  [1438, 191, 57, [1, 2, 2, 2]], [1438, 309, 57, [1, 2, 2, 2]], [1438, 424, 57, [2, 2, 2, 2]],
  [1562, 295, 57, [2, 1, 2, 2], true], [1562, 375, 57, [2, 2, 1, 2], true], [1562, 452, 57, [1, 2, 2, 2], true],
  [1709, 295, 57, [2, 2, 1, 2], true], [1709, 371, 57, [2, 2, 1, 2], true], [1709, 452, 57, [1, 2, 2, 2], true],
];

const Fixture = ({ x, y, w, e, box }: { x: number; y: number; w: number; e: number[]; box?: boolean }) => (
  <g transform={`translate(${x} ${y})`}>
    <path d={`M0 0H${w}V${e[0]}H0zM0 0H${e[3]}V15H0zM${w - e[1]} 0H${w}V15H${w - e[1]}zM0 ${15 - e[2]}H${w}V15H0z`} />
    {box && <rect x="26.5" y="4.5" width="4" height="5" fill="none" stroke="#000" strokeWidth="1" />}
  </g>
);

const bubbles = [{ x: 1257.5, n: "2" }, { x: 1525.5, n: "3" }, { x: 1812.5, n: "4" }];

const PlanDrawing = () => (
  <svg width="685" height="779" viewBox="1213 27 685 779">
    <g fill="none" shapeRendering="crispEdges">
      <path d={speckles} stroke="#deded0" />
      <path d={tiles} stroke="#c1c1b3" />
      <path d={brickTicks} stroke="#cfcfc1" />
      <path d={thickWalls} stroke="#9f9f93" strokeWidth="2" />
      <path d={thinWalls} stroke="#9f9f93" />
      <path d="M1237 175.5H1282" stroke="#9f9f93" strokeWidth="3" />
      <path d="M1282.5 302V508M1237 455.5H1283M1237 507.5H1283" stroke="#9f9f93" strokeDasharray="6.5 5" />
    </g>
    <g fill="none">
      <path d={zigWest + zigSouth} stroke="#cdcdbf" />
      <path d={doorArcs} stroke="#a3a397" />
      <circle cx="1812.5" cy="152" r="6.8" stroke="#9f9f93" />
      <circle cx="1525.5" cy="485" r="6.8" stroke="#9f9f93" />
      <circle cx="1812.5" cy="485" r="6.8" stroke="#9f9f93" />
    </g>
    <g stroke="#000" shapeRendering="crispEdges" strokeDasharray="56 13.7 13.9 13.6">
      <path d="M1257.5 31V642M1525.5 31V642" strokeDashoffset="24.2" />
      <path d="M1812.5 31V300" strokeDashoffset="37.2" />
      <path d="M1812.5 300V642" strokeDashoffset="85.4" />
      <path d="M1219.8 152.5H1886M1219.8 485.5H1886" />
    </g>
    <g shapeRendering="crispEdges">
      {fixtures.map(([x, y, w, e, b]) => <Fixture key={`${x}-${y}`} x={x} y={y} w={w} e={e} box={b} />)}
    </g>
    {bubbles.map((b) => (
      <g key={b.n}>
        <circle cx={b.x} cy="670.5" r="28" fill="none" stroke="#000" strokeWidth="1.1" />
        <text x={b.x - 0.5} y="680.5" textAnchor="middle" letterSpacing="0" fontFamily="Liberation Sans, Arial, sans-serif" fontSize="29">{b.n}</text>
      </g>
    ))}
    <rect x="1215" y="29" width="681" height="775" fill="none" stroke="#00f2ff" strokeWidth="4" />
  </svg>
);

/* ---------- property data ---------- */

type Prop = { name: string; value?: string; kind?: "button" | "check" | "checked" | "focus"; dim?: boolean; assoc?: boolean };
type Entry = Prop | { group: string };

const entries: Entry[] = [
  { name: "Parts Visibility", value: "Show Original" },
  { name: "Visibility/Graphics Overrides", value: "Edit...", kind: "button" },
  { name: "Graphic Display Options", value: "Edit...", kind: "button" },
  { name: "Orientation", value: "Project North" },
  { name: "Wall Join Display", value: "Clean all wall joins", dim: true },
  { name: "Discipline", value: "Electrical" },
  { name: "Show Hidden Lines", value: "By Discipline" },
  { name: "Default Analysis Display Style", value: "None" },
  { name: "Sub-Discipline", value: "Lighting", assoc: true },
  { name: "View Classification", assoc: true },
  { name: "Sun Path", kind: "check" },
  { group: "Underlay" },
  { name: "Range: Base Level", value: "None" },
  { name: "Range: Top Level", value: "Unbounded", dim: true },
  { name: "Underlay Orientation", value: "Look up" },
  { group: "Extents" },
  { name: "Crop View", kind: "checked" },
  { name: "Crop Region Visible", kind: "focus" },
  { name: "Annotation Crop", kind: "check" },
  { name: "View Range", value: "Edit...", kind: "button" },
  { name: "Associated Level", value: "Level 2", dim: true },
  { name: "Scope Box", value: "None" },
  { name: "Depth Clipping", value: "No clip", kind: "button" },
  { group: "Identity Data" },
  { name: "View Template", value: "<None>", kind: "button" },
  { name: "View Name", value: "2 - Ceiling Lighting - South Win..." },
  { name: "" },
];

const CellValue = ({ p }: { p: Prop }) => {
  if (p.kind === "button") return <CellButton>{p.value}</CellButton>;
  if (p.kind === "check") return <Check />;
  if (p.kind === "focus") return <FocusRing><Check $inset /></FocusRing>;
  if (p.kind === "checked")
    return (
      <Check>
        <svg width="14" height="14" viewBox="0 0 14 14"><path d="M2 7.5L5.5 11L12 3.5" fill="none" stroke="#444" strokeWidth="1.5" /></svg>
      </Check>
    );
  return <>{p.value}</>;
};

const PropertyRow = ({ e }: { e: Entry }) =>
  "group" in e ? (
    <GroupRow><span>{e.group}</span><DoubleUp /></GroupRow>
  ) : (
    <Row>
      <NameCell $dim={e.dim}>{e.name}</NameCell>
      <ValueCell $dim={e.dim} $focus={e.kind === "focus"}><CellValue p={e} /></ValueCell>
      <AssocCell>{e.assoc && <AssocButton />}</AssocCell>
    </Row>
  );

const ViewScroll = () => (
  <VScroll>
    <Gap $h={5} /><Chevron dir="up" />
    <Gap $h={364} /><VThumb $h={21} />
    <Gap $h={363} /><Chevron dir="down" />
  </VScroll>
);

const ViewHScroll = ({ a, b }: { a: number; b: number }) => (
  <HScroll>
    <Chevron dir="left" /><HSpace $w={a} /><HThumb /><HSpace $w={b} /><Chevron dir="right" /><HSpace $w={12} /><Grip />
  </HScroll>
);

export default function App() {
  return (
    <>
      <GlobalStyle />
      <AppFrame>
        <Workspace>
          <Palette>
            <PaletteTitle>Properties<CloseX /></PaletteTitle>
            <TypeSelector>
              <Preview><PlanIcon size={40} /></Preview>
              <TypeName>Ceiling Plan</TypeName>
              <svg width="10" height="6" viewBox="0 0 10 6"><path d="M0 0H10L5 5.5z" fill="#333" /></svg>
            </TypeSelector>
            <InstanceRow>
              <InstanceSelect>
                Ceiling Plan: 2 - Ceiling Lighting - South Wing - CM+
                <Chevron dir="down" sw={1.1} />
              </InstanceSelect>
              <EditType><EditTypeIcon />Edit Type</EditType>
            </InstanceRow>
            <GridArea>
              <Grid>{entries.map((e, i) => <PropertyRow key={i} e={e} />)}</Grid>
              <VScroll $w={21}>
                <Gap $h={6} /><Chevron dir="up" />
                <Gap $h={64} /><VThumb $h={293} />
                <Gap $h={239} /><Chevron dir="down" />
              </VScroll>
            </GridArea>
            <PaletteFooter>
              <HelpLink>Properties help</HelpLink>
              <Apply>Apply</Apply>
            </PaletteFooter>
            <PaletteTabs>
              <PaletteTab $active $w={82}>Properties</PaletteTab>
              <PaletteTab $w={300}>Project Browser - BIMrx-MEP_De...</PaletteTab>
            </PaletteTabs>
          </Palette>
          <Splitter $w={2} />

          <DocView $w={710} $bg="#eee">
            <TabBar $pad={7}>
              <DocTab $w={160} $bg="#eee"><HouseIcon /><DocTitle>3D View</DocTitle></DocTab>
              <TabMenu />
            </TabBar>
            <DocBody $pad={2}>
              <Canvas>
                <ModelDrawing />
                <NavSlot $x={648} $y={165}><NavBar /></NavSlot>
              </Canvas>
              <ViewScroll />
            </DocBody>
            <ControlBar>
              <Scale $pad={14} $w={94}>1/8" = 1'-0"</Scale>
              <IconStrip>
                <DetailFine />
                <BoxIcon a="#cfe8fa" b="#8fc4ea" c="#5a9fd0" line="#2d6a9c" />
                <SunOff /><ShadowOff /><Teapot /><CropOff /><CropShow /><LockedHouse /><Glasses />
                <BulbIcon /><AnalyticOff /><Highlight /><Displace /><Constraints />
              </IconStrip>
              <HSpace $w={9} />
              <ViewHScroll a={98} b={95} />
            </ControlBar>
          </DocView>
          <Splitter $w={2} />

          <DocView $w={708} $bg="#fff">
            <TabBar $pad={5}>
              <DocTab $w={310} $bg="#fff" $bold>
                <PlanIcon size={20} /><DocTitle>2 - Ceiling Lighting - South Wing...</DocTitle><CloseX />
              </DocTab>
              <TabMenu />
            </TabBar>
            <DocBody $pad={2}>
              <Canvas>
                <PlanDrawing />
                <IsolateBadge>Temporary Hide/Isolate</IsolateBadge>
                <NavSlot $x={649} $y={0}><NavBar twoD /></NavSlot>
              </Canvas>
              <ViewScroll />
            </DocBody>
            <ControlBar>
              <Scale $pad={14} $w={94}>1/8" = 1'-0"</Scale>
              <IconStrip>
                <DetailCoarse />
                <BoxIcon a="#fff" b="#e6e6e6" c="#a9a9a9" line="#4c4c4c" />
                <SunOff /><ShadowOff /><CropOn /><CropShow /><RevealIcon /><BulbIcon /><AnalyticOff /><Highlight /><Constraints />
              </IconStrip>
              <HSpace $w={9} />
              <ViewHScroll a={135} b={134} />
            </ControlBar>
          </DocView>
        </Workspace>

        <StatusBar>
          <StatusHint>Click to select, TAB for alternates, CTRL adds, SHIFT unselects.</StatusHint>
          <StatusCell $w={29}><WorksetIcon /></StatusCell>
          <Combo>MEP DESIGN (Not Editable)<ComboArrow><Chevron dir="down" sw={1.2} /></ComboArrow></Combo>
          <StatusCell $w={34} $x={9}><RequestIcon /></StatusCell>
          <StatusCell $w={35}>:0</StatusCell>
          <StatusCell $w={30}><OptionsIcon /></StatusCell>
          <StatusCell $w={28}><AddOptionIcon /></StatusCell>
          <Combo $dim>Main Model<ComboArrow><Chevron dir="down" sw={1.2} color="#999" /></ComboArrow></Combo>
          <StatusCell $w={178} $x={155}><BigCheck /></StatusCell>
          <StatusCell $w={102}>Editable Only</StatusCell>
          <StatusCell $w={30}><SelectLinks /></StatusCell>
          <StatusCell $w={30}><SelectUnderlay /></StatusCell>
          <StatusCell $w={30}><SelectPinned /></StatusCell>
          <StatusCell $w={30}><SelectFace /></StatusCell>
          <StatusCell $w={31}><DragIcon /></StatusCell>
          <StatusCell $w={26}><BusyIcon /></StatusCell>
          <StatusCell $w={22}><FilterIcon /></StatusCell>
          <StatusCell $w={30}>:0</StatusCell>
        </StatusBar>
      </AppFrame>
    </>
  );
}
